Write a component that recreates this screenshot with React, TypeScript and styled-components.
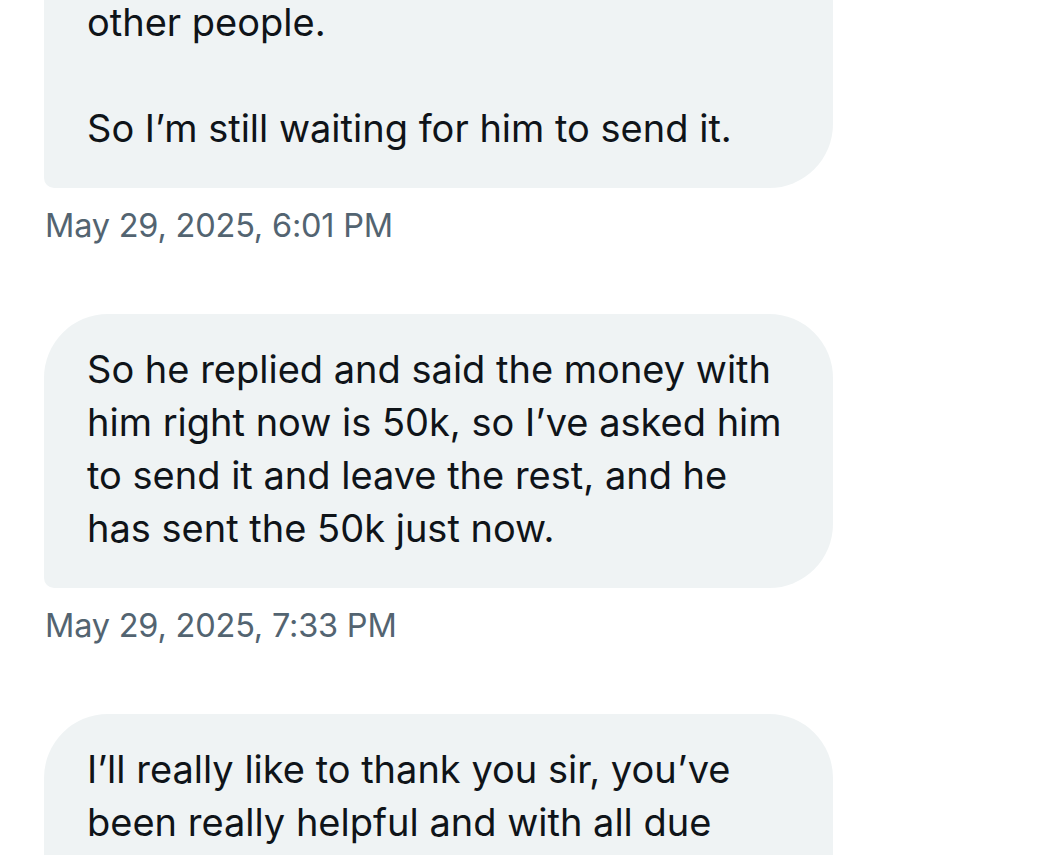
import React from "react";
import styled, { createGlobalStyle } from "styled-components";

const GlobalStyle = createGlobalStyle`
  html, body { margin: 0; padding: 0; background: #ffffff; }
  body { overflow: hidden; }
`;

const Thread = styled.main`
  display: flex;
  flex-direction: column;
  gap: 67px;
  margin-top: -86px;
  padding-left: 44px;
  font-family: Inter, "Liberation Sans", sans-serif;
`;

const Message = styled.section`
  display: flex;
  flex-direction: column;
  align-items: flex-start;
  gap: 17px;
`;

const Bubble = styled.div`
  box-sizing: border-box;
  width: 789px;
  padding: 29px 43px 33px;
  background: #eff3f4;
  border-radius: 64px 64px 64px 10px;
  color: #0f1419;
  font-size: 38px;
  line-height: 53px;
  white-space: pre-line;
`;

const Stamp = styled.time`
  display: block;
  padding-left: 1px;
  color: #536471;
  font-size: 32.5px;
  line-height: 42px;
  letter-spacing: -0.2px;
`;

const messages = [
  {
    text:
      "He said he’s still collecting from\nother people.\n\nSo I’m still waiting for him to send it.",
    time: "May 29, 2025, 6:01 PM",
  },
  {
    text:
      "So he replied and said the money with\nhim right now is 50k, so I’ve asked him\nto send it and leave the rest, and he\nhas sent the 50k just now.",
    time: "May 29, 2025, 7:33 PM",
  },
  {
    text:
      "I’ll really like to thank you sir, you’ve\nbeen really helpful and with all due\nrespect, I appreciate everything.",
    time: "May 29, 2025, 7:35 PM",
  },
];

export default function App() {
  return (
    <>
      <GlobalStyle />
      <Thread>
        {messages.map((m, i) => (
          <Message key={i}>
            <Bubble>{m.text}</Bubble>
            <Stamp>{m.time}</Stamp>
          </Message>
        ))}
      </Thread>
    </>
  );
}
